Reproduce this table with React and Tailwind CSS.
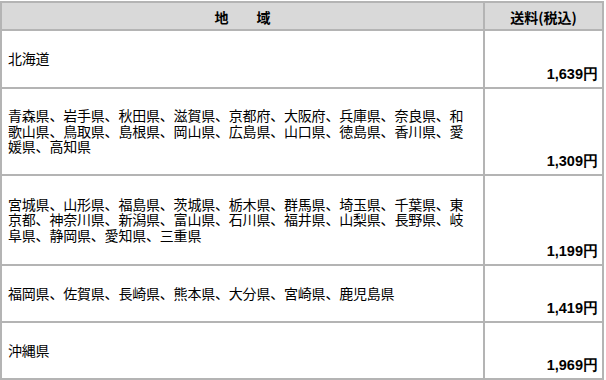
import React from 'react';

const rows = [
  { area: '北海道', price: '1,639円', h: 'h-[58px]' },
  {
    area: '青森県、岩手県、秋田県、滋賀県、京都府、大阪府、兵庫県、奈良県、和歌山県、鳥取県、島根県、岡山県、広島県、山口県、徳島県、香川県、愛媛県、高知県',
    price: '1,309円',
    h: 'h-[87px]',
  },
  {
    area: '宮城県、山形県、福島県、茨城県、栃木県、群馬県、埼玉県、千葉県、東京都、神奈川県、新潟県、富山県、石川県、福井県、山梨県、長野県、岐阜県、静岡県、愛知県、三重県',
    price: '1,199円',
    h: 'h-[90px]',
  },
  { area: '福岡県、佐賀県、長崎県、熊本県、大分県、宮崎県、鹿児島県', price: '1,419円', h: 'h-[57px]' },
  { area: '沖縄県', price: '1,969円', h: 'h-[57px]' },
];

export default function App() {
  return (
    <div className="w-[606px] h-[380px] bg-white pt-[1px]">
      <table className="w-[604px] table-fixed border-collapse border-2 border-[#a8a8a8] text-black font-['Noto_Sans_CJK_JP','Noto_Sans',sans-serif]">
        <colgroup>
          <col className="w-[483px]" />
          <col />
        </colgroup>
        <thead>
          <tr className="h-[28px] bg-[#d9d9d9]">
            <th className="border-2 border-[#b4b4b4] text-[14px] font-bold text-center align-middle pt-[3px]">地　　域</th>
            <th className="border-2 border-[#b4b4b4] text-[14px] font-bold text-center align-middle pt-[3px]">送料(税込)</th>
          </tr>
        </thead>
        <tbody>
          {rows.map((r) => (
            <tr key={r.price} className={r.h}>
              <td className="border-2 border-[#b4b4b4] align-middle pl-[6px] pr-[12px] text-[14px] tracking-[-0.2px] leading-[15.5px]">
                {r.area}
              </td>
              <td className="border-2 border-[#b4b4b4] align-bottom text-right pr-[4px] pb-[1px] text-[14.5px] font-bold font-['Liberation_Sans',Arial,sans-serif]">
                {r.price}
              </td>
            </tr>
          ))}
        </tbody>
      </table>
    </div>
  );
}
